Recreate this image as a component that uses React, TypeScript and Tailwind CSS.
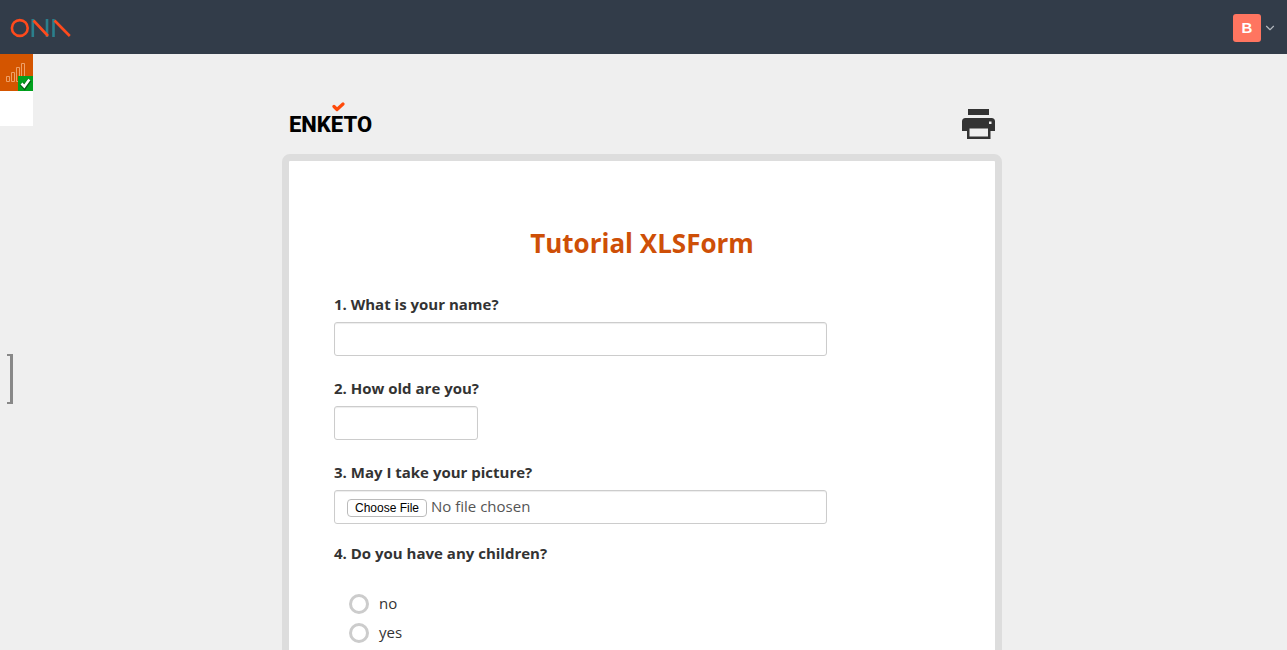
import type { ReactNode } from 'react';
import { ChevronDown } from 'lucide-react';

function OnaLogo() {
  return (
    <svg width="62" height="20" viewBox="0 0 62 20" fill="none" strokeWidth="2.6" aria-hidden="true">
      <g stroke="#2b7f8c">
        <path d="M22.8 1v18M37 1v18M43.5 1v18" />
      </g>
      <g stroke="#ff4a1c">
        <circle cx="9.8" cy="10" r="7.9" />
        <path d="M23.5 2.500 38 18M44.500 2.500 59.800 18" />
      </g>
    </svg>
  );
}

function TopBar() {
  return (
    <header className="flex h-[54px] items-center justify-between bg-[#323c49] pl-[10px] pr-2.5">
      <a href="#home" aria-label="Ona" className="pt-0.5">
        <OnaLogo />
      </a>
      <button type="button" aria-label="Account" className="flex items-center gap-0.5 pt-0.5">
        <span className="flex size-7 items-center justify-center rounded-[3px] bg-[#ff7560] font-['Liberation_Sans',sans-serif] text-[15px] font-bold text-white">
          B
        </span>
        <ChevronDown size={14} strokeWidth={2} className="text-[#b3b8be]" />
      </button>
    </header>
  );
}

function SideStatus() {
  return (
    <aside className="flex w-[33px] shrink-0 flex-col">
      <div className="h-[72px] bg-white">
        <svg width="33" height="37" viewBox="0 0 33 37" fill="none" role="img" aria-label="Online" className="block">
          <path fill="#d45500" d="M0 0h33v37H0z" />
          <path
            stroke="#ee9f66"
            d="M6.5 22.5h3v5h-3zM11.5 18.5h3v9h-3zM16.5 13.5h3v14h-3zM21.5 9.5h3v18h-3z"
          />
          <path fill="#00a11d" d="M18 22h15v15H18z" />
          <path stroke="#063d0e" strokeOpacity=".7" strokeWidth="4.4" d="m21.5 29.8 3 3.2 5-7" />
          <path stroke="#fff" strokeWidth="2.6" d="m21.5 29.5 2.8 3 5-7" />
        </svg>
      </div>
      <button
        type="button"
        aria-label="Toggle side panel"
        className="ml-[7px] mt-[228px] h-[50px] w-1.5 border-y-2 border-r-3 border-[#888]"
      />
    </aside>
  );
}

function EnketoLogo() {
  return (
    <a
      href="#enketo"
      className="relative block font-['Roboto',sans-serif] text-[22px] font-extrabold leading-[30px] text-black"
    >
      ENKETO
      <svg width="13" height="10" viewBox="0 0 13 10" fill="none" aria-hidden="true" className="absolute -top-2 left-[43px]">
        <path d="m2 4.500 3 3 6-5.500" stroke="#ff4a0a" strokeWidth="3.2" strokeLinecap="round" strokeLinejoin="round" />
      </svg>
    </a>
  );
}

function PrintIcon() {
  return (
    <svg width="33" height="31" viewBox="0 0 33 31" aria-hidden="true">
      <path fill="#333" d="M6 0h21v6H6z" />
      <path
        fill="#333"
        fillRule="evenodd"
        d="M3.500 9h26A3.500 3.500 0 0 1 33 12.500V22h-4.500v8H5v-8H0v-9.500A3.500 3.500 0 0 1 3.500 9zM27 12.500v2.500h2.500v-2.500zM7.500 19.500v8h18.500v-8z"
      />
    </svg>
  );
}

const fieldClass =
  'block h-[34px] rounded-[3px] border border-[#ccc] bg-white px-3 text-[15px] text-[#555] shadow-[inset_0_1px_1px_rgba(0,0,0,0.075)]';

function Question({ id, label, children }: { id: string; label: string; children: ReactNode }) {
  return (
    <div>
      <label htmlFor={id} className="mb-2 block font-bold leading-5">
        {label}
      </label>
      {children}
    </div>
  );
}

function Choice({ value }: { value: string }) {
  return (
    <label className="flex h-[29px] items-center gap-2.5">
      <input
        type="radio"
        name="has_children"
        value={value}
        className="size-5 appearance-none rounded-full border-3 border-[#ccc] bg-white checked:bg-[#666]"
      />
      {value}
    </label>
  );
}

export default function App() {
  return (
    <div className="h-screen overflow-hidden bg-[#efefef] font-['Open_Sans','Noto_Sans',sans-serif] text-[15px] text-[#333]">
      <TopBar />
      <div className="flex">
        <SideStatus />
        <main className="min-w-0 grow pr-9">
          <div className="mx-auto max-w-[720px]">
            <div className="flex h-[100px] items-end justify-between px-[7px] pb-3.5">
              <EnketoLogo />
              <button type="button" aria-label="Print">
                <PrintIcon />
              </button>
            </div>
            <form className="rounded-lg border-[7px] border-[#ddd] bg-white px-[45px] pb-16 pt-16">
              <h1 className="mb-[33px] text-center text-[26px] font-bold leading-9 text-[#ce4f07]">Tutorial XLSForm</h1>
              <div className="flex flex-col gap-[22px]">
                <Question id="name" label="1. What is your name?">
                  <input id="name" type="text" className={`${fieldClass} w-4/5`} />
                </Question>
                <Question id="age" label="2. How old are you?">
                  <input id="age" type="number" className={`${fieldClass} w-36`} />
                </Question>
                <Question id="photo" label="3. May I take your picture?">
                  <input
                    id="photo"
                    type="file"
                    accept="image/*"
                    className={`${fieldClass} w-4/5 pt-1 file:mr-1 file:h-[18px] file:rounded file:border file:border-solid file:border-[#bbb] file:bg-white file:px-[7px] file:font-['Liberation_Sans',sans-serif] file:text-[12px] file:leading-4 file:text-black`}
                  />
                </Question>
              </div>
              <fieldset className="mt-[19px]">
                <legend className="mb-[26px] font-bold leading-5">4. Do you have any children?</legend>
                <div className="flex flex-col pl-[15px]">
                  <Choice value="no" />
                  <Choice value="yes" />
                </div>
              </fieldset>
            </form>
          </div>
        </main>
      </div>
    </div>
  );
}
